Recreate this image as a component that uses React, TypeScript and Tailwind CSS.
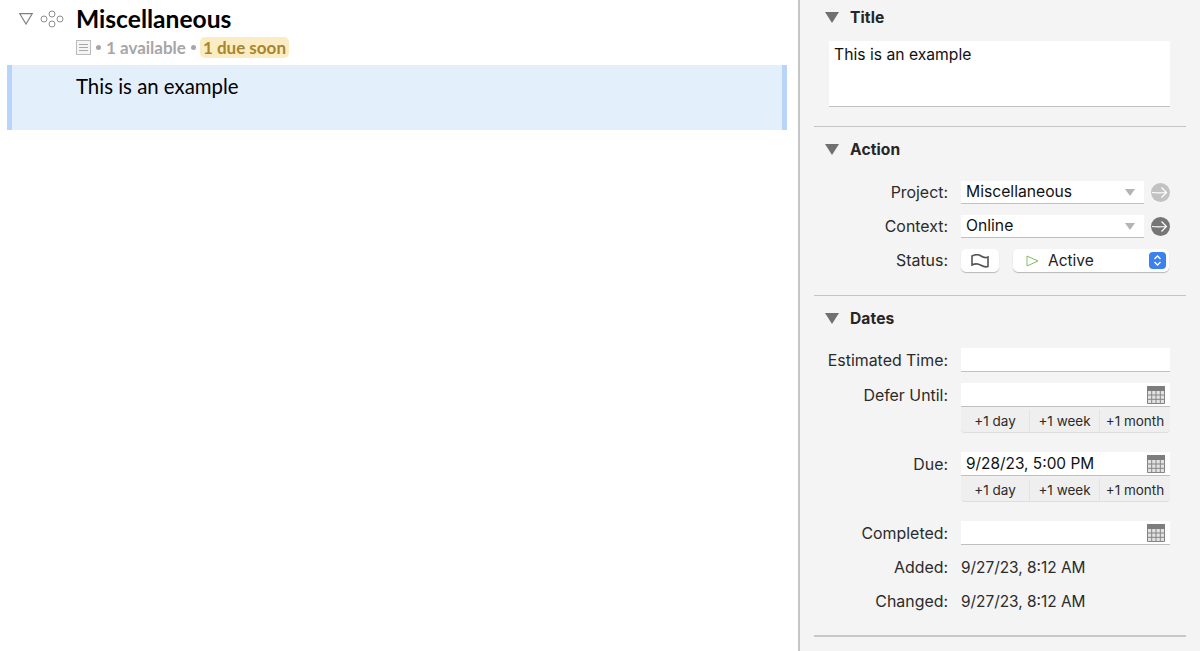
import React from 'react';

const SANS = "font-['Inter','Liberation_Sans',sans-serif]";

const Disclosure = () => (
  <svg width="14" height="11" viewBox="0 0 14 11" className="shrink-0">
    <path d="M0 0H14L7 11Z" fill="#707070" />
  </svg>
);

const SectionHeader = ({ title }: { title: string }) => (
  <div className="flex h-[18px] items-center gap-[11px] pl-[11px]">
    <Disclosure />
    <span className="pt-[1px] text-[15.6px] font-bold tracking-[0.1px] text-[#262626]">{title}</span>
  </div>
);

const Divider = ({ thick }: { thick?: boolean }) => (
  <div className={thick ? 'h-[2px] bg-[#c8c8c8]' : 'h-[1px] bg-[#c4c4c4]'} />
);

const CalendarIcon = () => (
  <svg width="18" height="18" viewBox="0 0 18 18" className="shrink-0">
    <rect x="0" y="0" width="18" height="18" fill="#e2e2e2" />
    <rect x="0" y="0" width="18" height="5" fill="#7d7d7d" />
    <path d="M0.5 5V17.5H17.5V5M4.7 5V18M9 5V18M13.3 5V18M0 9H18M0 13.3H18" stroke="#858585" strokeWidth="1" fill="none" />
  </svg>
);

const ArrowCircle = ({ color }: { color: string }) => (
  <svg width="19" height="19" viewBox="0 0 19 19" className="shrink-0">
    <circle cx="9.5" cy="9.5" r="9.5" fill={color} />
    <path d="M1 9.5C5 10 10 10 15 9.5M10.5 4.5L15.5 9.5L10.5 14.5" stroke="#fff" strokeWidth="1.2" fill="none" />
  </svg>
);

const Row = ({ label, children, className }: { label: string; children: React.ReactNode; className?: string }) => (
  <div className={`flex items-center ${className || ''}`}>
    <div className="w-[134px] shrink-0 pt-[1px] text-right text-[15.9px] leading-[20px] text-[#2b2b2b]">{label}</div>
    <div className="ml-[13px] min-w-0 flex-1">{children}</div>
  </div>
);

const Field = ({ value, calendar }: { value?: string; calendar?: boolean }) => (
  <div className="flex h-[24px] w-[209px] items-center justify-between border-b border-[#c0c0c0] bg-white px-[5px] text-[15.4px] text-[#111]">
    <span>{value}</span>
    {calendar && <CalendarIcon />}
  </div>
);

const ComboField = ({ value }: { value: string }) => (
  <div className="flex h-[23px] w-[183px] items-center justify-between border-b border-[#c0c0c0] bg-white pl-[5px] pr-[9px] text-[15.7px] text-[#111]">
    <span>{value}</span>
    <svg width="10" height="7" viewBox="0 0 10 7">
      <path d="M0 0H10L5 7Z" fill="#b4b4b4" />
    </svg>
  </div>
);

const Steppers = () => (
  <div className="flex h-[26px] w-[209px] rounded-b-[4px] border-b border-[#dedede] bg-[#efefef] pt-[3px] text-[13.5px] text-[#2b2b2b]">
    <div className="flex w-[69px] items-center justify-center border-r border-[#e3e3e3]">+1 day</div>
    <div className="flex w-[70px] items-center justify-center border-r border-[#e3e3e3]">+1 week</div>
    <div className="flex flex-1 items-center justify-center">+1 month</div>
  </div>
);

export default function App() {
  return (
    <div className={`flex h-[651px] w-[1200px] overflow-hidden bg-white ${SANS}`}>
      {/* outline */}
      <div className="w-[798px] shrink-0 pl-[7px] pr-[11px] font-['Lato',sans-serif]">
        <div className="flex h-[65px] pl-[12px]">
          <div className="flex h-[38px] items-center">
            <svg width="14" height="12" viewBox="0 0 14 12">
              <path d="M0.8 0.7H13.2L7 11Z" fill="none" stroke="#808080" strokeWidth="1.2" />
            </svg>
            <svg width="24" height="18" viewBox="0 0 24 18" className="ml-[7px]">
              <g fill="none" stroke="#8c8c8c" strokeWidth="1">
                <circle cx="4" cy="9" r="3" />
                <circle cx="12" cy="4" r="3" />
                <circle cx="12" cy="14" r="3" />
                <circle cx="20" cy="9" r="3" />
              </g>
            </svg>
          </div>
          <div className="ml-[12px] pt-[5px]">
            <div className="text-[24.6px] font-bold leading-[27px] text-black">Miscellaneous</div>
            <div className="mt-[3px] flex items-center text-[17px] font-bold text-[#a6a6a6]">
              <svg width="15" height="15" viewBox="0 0 15 15">
                <rect x="0.5" y="0.5" width="14" height="14" fill="#f4f4f4" stroke="#bcbcbc" />
                <path d="M3 4.5H12M3 7.5H12M3 10.5H12" stroke="#a8a8a8" />
              </svg>
              <span className="ml-[5px] h-[5px] w-[5px] rounded-full bg-[#a6a6a6]" />
              <span className="ml-[5px]">1 available</span>
              <span className="ml-[5px] h-[5px] w-[5px] rounded-full bg-[#a6a6a6]" />
              <span className="ml-[4px] rounded-[5px] bg-[#fcecc4] px-[3px] leading-[21px] text-[#a8862f]">1 due soon</span>
            </div>
          </div>
        </div>
        <div className="h-[65px] border-x-[5px] border-[#b8d4fb] bg-[#e4effc] pl-[64px] pt-[8px] text-[20.4px] leading-[26px] text-black">
          This is an example
        </div>
      </div>

      {/* inspector */}
      <div className="w-[402px] shrink-0 border-l-2 border-[#c6c6c6] bg-[#f4f4f4] px-[14px]">
        <div className="h-[126px] pt-[8px]">
          <SectionHeader title="Title" />
          <div className="ml-[15px] mt-[15px] h-[66px] w-[341px] border-b border-[#c0c0c0] bg-white pl-[5px] pt-[3px] text-[15.7px] leading-[21px] text-[#111]">
            This is an example
          </div>
        </div>
        <Divider />
        <div className="h-[168px] pt-[13px]">
          <SectionHeader title="Action" />
          <div className="mt-[23px] flex flex-col gap-[11px]">
            <Row label="Project:">
              <div className="flex items-center gap-[7px]">
                <ComboField value="Miscellaneous" />
                <ArrowCircle color="#c2c2c2" />
              </div>
            </Row>
            <Row label="Context:">
              <div className="flex items-center gap-[7px]">
                <ComboField value="Online" />
                <ArrowCircle color="#767676" />
              </div>
            </Row>
            <Row label="Status:">
              <div className="flex items-center gap-[14px]">
                <div className="flex h-[23px] w-[38px] items-center justify-center rounded-[5px] bg-white shadow-[0_1px_1px_rgba(0,0,0,0.25)]">
                  <svg width="18" height="14" viewBox="0 0 18 14">
                    <path d="M1 2C5 0 8 0.5 10 2C12.5 3.8 15 4 17 3V12.5C14 13.5 12 12.5 10 11.3C7.5 9.8 4 9.5 1 11Z" fill="none" stroke="#555" strokeWidth="1.6" />
                  </svg>
                </div>
                <div className="flex h-[23px] w-[156px] items-center rounded-[5px] bg-white pl-[13px] pr-[3px] text-[15.5px] text-[#222] shadow-[0_1px_1px_rgba(0,0,0,0.25)]">
                  <svg width="13" height="12" viewBox="0 0 13 12">
                    <path d="M1 1L12 6L1 11Z" fill="none" stroke="#86bb5e" strokeWidth="1" />
                  </svg>
                  <span className="ml-[9px] flex-1">Active</span>
                  <div className="flex h-[17px] w-[17px] items-center justify-center rounded-[4px] bg-[#3b82f0]">
                    <svg width="9" height="13" viewBox="0 0 9 13">
                      <path d="M1.5 5L4.5 2L7.5 5M1.5 8L4.5 11L7.5 8" fill="none" stroke="#fff" strokeWidth="1.4" />
                    </svg>
                  </div>
                </div>
              </div>
            </Row>
          </div>
        </div>
        <Divider />
        <div className="h-[339px] pt-[13px]">
          <SectionHeader title="Dates" />
          <div className="mt-[21px] flex flex-col">
            <Row label="Estimated Time:">
              <Field />
            </Row>
            <Row label="Defer Until:" className="mt-[11px]">
              <Field calendar />
            </Row>
            <div className="ml-[147px]">
              <Steppers />
            </div>
            <Row label="Due:" className="mt-[19px]">
              <Field value="9/28/23, 5:00 PM" calendar />
            </Row>
            <div className="ml-[147px]">
              <Steppers />
            </div>
            <Row label="Completed:" className="mt-[19px]">
              <Field calendar />
            </Row>
            <Row label="Added:" className="mt-[11px] h-[23px]">
              <span className="text-[15.4px] text-[#2b2b2b]">9/27/23, 8:12 AM</span>
            </Row>
            <Row label="Changed:" className="mt-[11px] h-[23px]">
              <span className="text-[15.4px] text-[#2b2b2b]">9/27/23, 8:12 AM</span>
            </Row>
          </div>
        </div>
        <Divider thick />
      </div>
    </div>
  );
}
